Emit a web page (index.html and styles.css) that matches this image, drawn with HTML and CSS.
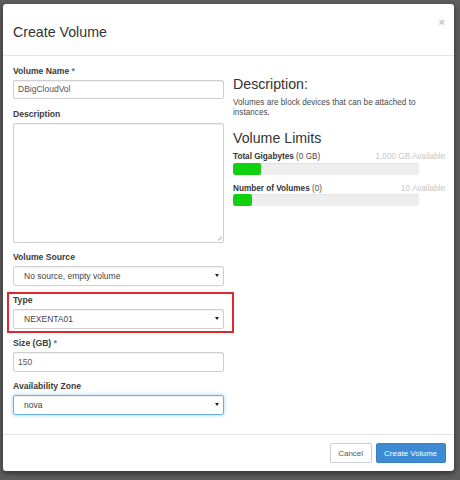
FILE: index.html
```html
<!DOCTYPE html>
<html>
<head>
<meta charset="utf-8">
<link rel="stylesheet" href="styles.css">
</head>
<body>
<div class="backdrop">
  <div class="modal">
    <div class="modal-header">
      <h3 class="modal-title">Create Volume</h3>
      <span class="close">×</span>
    </div>
    <div class="modal-body">
      <div class="left">
        <div class="group">
          <label class="lbl">Volume Name <span class="req">*</span></label>
          <div class="control">DBigCloudVol</div>
        </div>
        <div class="group">
          <label class="lbl">Description</label>
          <div class="control textarea">
            <svg class="grip" width="5" height="5" viewBox="0 0 5 5"><path d="M4.5 0.5L0.5 4.5M4.5 2.5L2.5 4.5" stroke="#999" stroke-width="0.7"/></svg>
          </div>
        </div>
        <div class="group">
          <label class="lbl">Volume Source</label>
          <div class="control select"><span>No source, empty volume</span><i class="caret"></i></div>
        </div>
        <div class="highlight">
          <label class="lbl">Type</label>
          <div class="control select"><span>NEXENTA01</span><i class="caret"></i></div>
        </div>
        <div class="group">
          <label class="lbl">Size (GB) <span class="req">*</span></label>
          <div class="control">150</div>
        </div>
        <div class="group">
          <label class="lbl">Availability Zone</label>
          <div class="control select focus"><span>nova</span><i class="caret"></i></div>
        </div>
      </div>
      <div class="right">
        <h3 class="heading">Description:</h3>
        <p class="desc">Volumes are block devices that can be attached to instances.</p>
        <h3 class="heading limits">Volume Limits</h3>
        <div class="quota">
          <div class="quota-row"><span><b>Total Gigabytes</b> (0 GB)</span><span class="avail">1,000 GB Available</span></div>
          <div class="bar"><div class="fill" style="width:28px"></div></div>
        </div>
        <div class="quota">
          <div class="quota-row"><span><b>Number of Volumes</b> (0)</span><span class="avail">10 Available</span></div>
          <div class="bar"><div class="fill" style="width:19px"></div></div>
        </div>
      </div>
    </div>
    <div class="modal-footer">
      <button class="btn btn-default">Cancel</button>
      <button class="btn btn-primary">Create Volume</button>
    </div>
  </div>
</div>
</body>
</html>
```

FILE: styles.css
```css
html, body {
  margin: 0;
  padding: 0;
}
body {
  width: 460px;
  height: 480px;
  overflow: hidden;
  background: #5e5e5e;
  font-family: "Liberation Sans", Arial, sans-serif;
  color: #333;
}
.backdrop {
  padding: 4px 0 0 3px;
}
.modal {
  width: 451px;
  height: 467px;
  background: #fff;
  border-radius: 3px;
  box-shadow: 0 2px 6px rgba(0, 0, 0, 0.55);
  display: flex;
  flex-direction: column;
}
.modal-header {
  height: 51px;
  border-bottom: 1px solid #e5e5e5;
  display: flex;
  justify-content: space-between;
  padding: 0 10px;
}
.modal-title {
  margin: 0;
  font-size: 14.2px;
  font-weight: normal;
  line-height: 16px;
  padding-top: 20px;
  color: #333;
}
.close {
  font-size: 11px;
  font-weight: bold;
  color: #c4c4c4;
  line-height: 12px;
  padding-top: 12px;
  margin-right: -1px;
}
.modal-body {
  height: 378px;
  display: grid;
  grid-template-columns: 211px 212px;
  column-gap: 9px;
  padding: 0 9px 0 10px;
}
.left {
  padding-top: 8.5px;
}
.group {
  margin-bottom: 8.5px;
}
.lbl {
  display: block;
  font-size: 8.6px;
  font-weight: bold;
  line-height: 12px;
  margin-bottom: 3px;
  color: #3a3a3a;
}
.req {
  color: #3a87ad;
}
.control {
  box-sizing: border-box;
  height: 19.5px;
  border: 1px solid #cfcfcf;
  border-radius: 2px;
  box-shadow: inset 0 1px 1px rgba(0, 0, 0, 0.06);
  font-size: 8.5px;
  color: #555;
  padding: 0 4px;
  display: flex;
  align-items: center;
}
.textarea {
  height: 120px;
  align-items: flex-end;
  justify-content: flex-end;
  padding: 0 1px 1px 0;
}
.grip {
  display: block;
}
.select {
  justify-content: space-between;
  padding: 0 4px 0 10px;
  color: #444;
}
.caret {
  width: 0;
  height: 0;
  border-left: 2px solid transparent;
  border-right: 2px solid transparent;
  border-top: 3.5px solid #222;
  margin-right: 0.5px;
}
.focus {
  border-color: #66afe9;
  box-shadow: inset 0 1px 1px rgba(0, 0, 0, 0.06), 0 0 4px rgba(102, 175, 233, 0.6);
}
.highlight {
  margin: -2.5px -10px 4px -6px;
  border: 2px solid #e0272e;
  padding: 0.5px 8px 2.5px 4px;
}
.right {
  padding-top: 20px;
}
.heading {
  margin: 0;
  font-size: 14.2px;
  font-weight: normal;
  line-height: 16px;
  color: #333;
}
.desc {
  margin: 5.5px 0 11px;
  font-size: 8.2px;
  line-height: 10.7px;
  color: #4a4a4a;
}
.limits {
  margin-bottom: 5.5px;
}
.quota {
  margin-bottom: 8px;
}
.quota-row {
  display: flex;
  justify-content: space-between;
  font-size: 8.2px;
  line-height: 11px;
  color: #4a4a4a;
}
.quota-row b {
  color: #333;
}
.avail {
  color: #c6c6c6;
}
.bar {
  width: 186px;
  height: 12px;
  margin-top: 0.5px;
  background: #eeeeee;
  border-radius: 2px;
  box-shadow: inset 0 1px 1px rgba(0, 0, 0, 0.05);
  overflow: hidden;
}
.fill {
  height: 100%;
  background: #10d010;
  border-radius: 2px;
}
.modal-footer {
  flex: 1;
  border-top: 1px solid #e5e5e5;
  display: flex;
  justify-content: flex-end;
  align-items: center;
  gap: 4px;
  padding: 0 8.5px 0 0;
}
.btn {
  box-sizing: border-box;
  height: 20px;
  font-family: "Liberation Sans", Arial, sans-serif;
  font-size: 8px;
  padding: 0 7.5px;
  border-radius: 2px;
  border: 1px solid #ccc;
  margin: 0;
}
.btn-default {
  background: #fff;
  color: #555;
}
.btn-primary {
  background: #3d8bd3;
  border-color: #3a80c3;
  color: #fff;
}
```
